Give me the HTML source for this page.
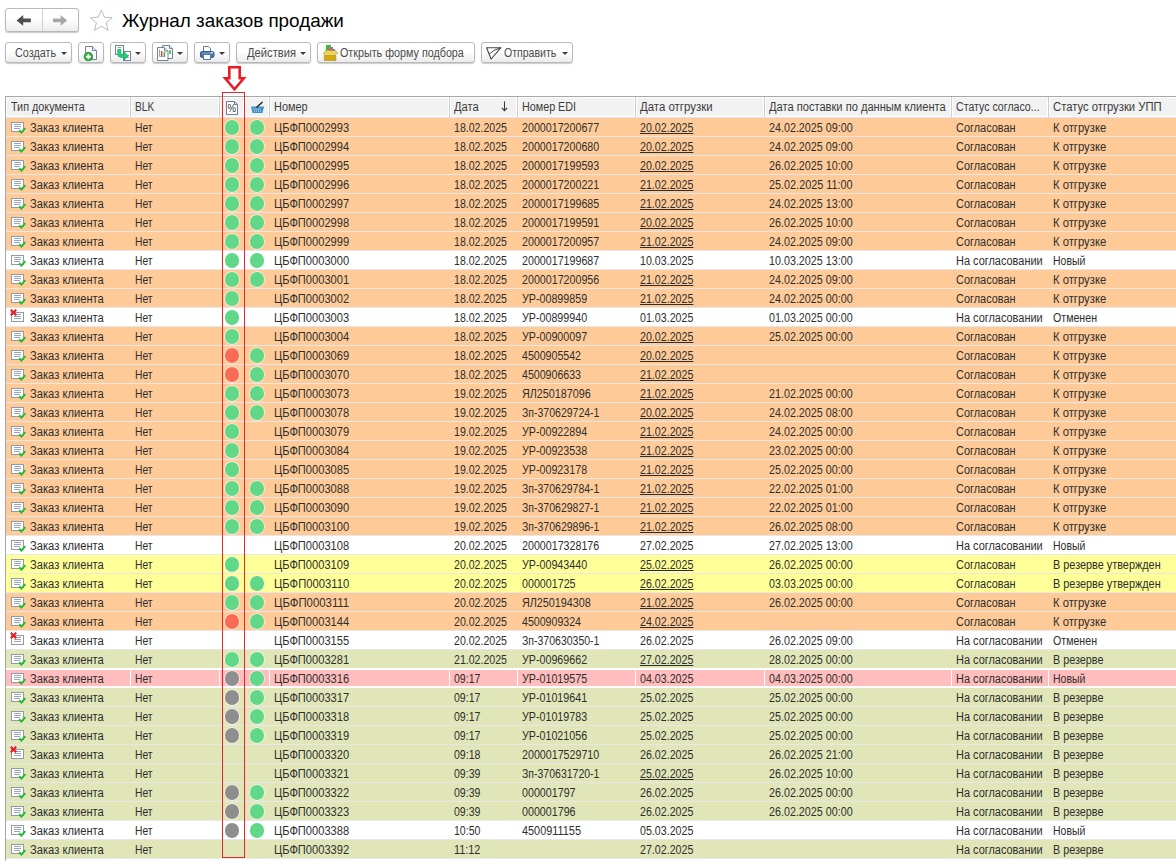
<!DOCTYPE html>
<html lang="ru"><head><meta charset="utf-8"><title>Журнал заказов продажи</title>
<style>
html,body{margin:0;padding:0}
body{width:1176px;height:861px;overflow:hidden;background:#fff;position:relative;font:12px/18px "Liberation Sans",sans-serif;color:#2e2e2e}
.abs{position:absolute}
/* navigation */
.nav{position:absolute;left:5px;top:8px;width:72px;height:22px;border:1px solid #b9b9b9;border-radius:3px;background:linear-gradient(#fff 40%,#ececec);box-shadow:0 1px 1px rgba(0,0,0,.22)}
.nav:before{content:"";position:absolute;left:36px;top:0;width:1px;height:22px;background:#cfcfcf}
.nav svg{position:absolute;top:0;left:0}
.star{position:absolute;left:88px;top:8px}
.title{position:absolute;left:122px;top:9.500px;font-size:18.500px;line-height:22px;color:#000;white-space:nowrap;transform-origin:0 50%;transform:scaleX(1.02)}
/* toolbar */
.btn{position:absolute;top:42px;height:19px;border:1px solid #b9b9b9;border-radius:3px;background:linear-gradient(#fff 45%,#ebebeb);box-shadow:0 1px 1px rgba(0,0,0,.2);box-sizing:content-box}
.btn .t{position:absolute;top:1px;line-height:19px;white-space:nowrap;transform-origin:0 50%;transform:scaleX(.9);color:#4a4a4a}
.btn .dd{position:absolute;top:9px;width:0;height:0;border-left:3px solid transparent;border-right:3px solid transparent;border-top:3px solid #3c3c3c}
.btn svg{position:absolute;left:0;top:0}
/* annotation */
.arrow{position:absolute;left:221px;top:64px}
.redbox{position:absolute;left:222px;top:92px;width:21px;height:764px;border:1px solid #e8262b}
/* grid */
.gb-l{position:absolute;left:5px;top:96px;width:1px;height:765px;background:#a7a7a7}
.gb-t{position:absolute;left:5px;top:96px;width:1171px;height:1px;background:#a7a7a7}
.hdr{position:absolute;left:6px;top:97px;width:1170px;height:20px;background:#fff;border-bottom:1px solid #e2e2e2}
.h{position:absolute;top:1px;height:18px;background:#f2f2f2}
.hs{position:absolute;top:0;width:1px;height:20px;background:#cdcdcd}
.ht{position:absolute;top:0;line-height:20px;white-space:nowrap;transform-origin:0 50%;transform:scaleX(.93);color:#3b3b3b}
.hdr svg{position:absolute}
.r{position:absolute;left:6px;width:1170px;height:18px;border-bottom:1px solid #e7e7e7}
.o{background:#fecb98}.w{background:#fff}.y{background:#ffff98}.g{background:#e1e6b9}.p{background:#ffbdbd;border-bottom-color:#fff;box-shadow:0 -1px 0 #fff,inset 0 1px 0 #fff,inset 0 -1px 0 #fff}
.c{position:absolute;top:0;line-height:20px;white-space:nowrap;transform-origin:0 50%;transform:scaleX(.93)}
.c u{text-decoration:underline;text-underline-offset:1px}
.ic{position:absolute;left:4px;top:0}
.c0{left:24px}
.c1{left:129px}
.c2{left:268px}
.c3{left:448px}
.c4{left:516px}
.c5{left:634px}
.c6{left:763px}
.c7{left:950px}
.c8{left:1047px}
.d{position:absolute;top:2px;width:14.500px;height:14.500px;border-radius:50%;box-shadow:0 0 0 .7px rgba(255,255,255,.7)}
.d1{left:218.750px}.d2{left:243.750px}
.G{background:#60d888}.R{background:#f96b52}.X{background:#8e8e8e}
.vs{position:absolute;top:0;width:1px;height:18px;background:#fff}
.c0{transform:scaleX(0.931)}
.c1{transform:scaleX(0.861)}
.c2{transform:scaleX(0.927)}
.c3{transform:scaleX(0.882)}
.c4{transform:scaleX(0.892)}
.c5{transform:scaleX(0.889)}
.c6{transform:scaleX(0.895)}
.c7{transform:scaleX(0.91)}
.c8{transform:scaleX(0.938)}
.c.s872{transform:scaleX(0.872)}
.c.s875{transform:scaleX(0.875)}
.c.s879{transform:scaleX(0.879)}
.c.s884{transform:scaleX(0.884)}
.c.s886{transform:scaleX(0.886)}
.c.s890{transform:scaleX(0.89)}
.c.s899{transform:scaleX(0.899)}
.c.s903{transform:scaleX(0.903)}
.c.s906{transform:scaleX(0.906)}
.c.s908{transform:scaleX(0.908)}
.c.s912{transform:scaleX(0.912)}
.c.s938{transform:scaleX(0.938)}
.c.s948{transform:scaleX(0.948)}

</style></head>
<body>
<div class="nav">
<svg width="72" height="22" viewBox="0 0 72 22">
<path d="M10.600 11.400l6.600-5.400v3.500h7.600v3.800h-7.600v3.500z" fill="#4d4d4d"/>
<path d="M61.200 11.400l-6.600-5.400v3.500h-7.600v3.800h7.600v3.500z" fill="#a8a8a8"/>
</svg>
</div>
<svg class="star" width="26" height="24" viewBox="0 0 26 24"><path d="M13.300 2l3.100 7.200 7.800.6-6 5 1.900 7.600-6.800-4.200-6.800 4.200 1.900-7.600-6-5 7.800-.6z" fill="#fff" stroke="#b4bcc6" stroke-width="1"/></svg>
<div class="title">Журнал заказов продажи</div>

<div class="btn" style="left:5px;width:65px"><span class="t" style="left:9px;transform:scaleX(.899)">Создать</span><i class="dd" style="left:55px"></i></div>
<div class="btn" style="left:78px;width:24px">
<svg width="24" height="18" viewBox="0 0 24 18"><path d="M6.500 3.500h7l4 4v9h-11z" fill="#fff" stroke="#71839b"/><path d="M13.500 3.500v4h4" fill="#e9eef4" stroke="#71839b"/><circle cx="9.400" cy="13.600" r="4.300" fill="#2cb040" stroke="#1d8c2c" stroke-width=".8"/><path d="M9.400 11v5.200M6.800 13.600h5.200" stroke="#fff" stroke-width="1.700"/></svg>
</div>
<div class="btn" style="left:110px;width:34px">
<svg width="24" height="18" viewBox="0 0 24 18"><rect x="4.500" y="2.500" width="8" height="9" fill="#fff" stroke="#71839b"/><path d="M6.500 4.500h4" stroke="#9aa7b6"/><rect x="12.500" y="8.500" width="7" height="9" fill="#fff" stroke="#71839b"/><path d="M15 12.500h3M15 14.500h3" stroke="#9aa7b6"/><path d="M6.800 6.300h3v4.200q0 1 1 1h2v-3l4.400 4.400-4.400 4.400v-3h-3q-3 0-3-3z" fill="#1fd07c" stroke="#17a55f" stroke-width=".7"/></svg>
<i class="dd" style="left:24px"></i></div>
<div class="btn" style="left:152px;width:34px">
<svg width="24" height="18" viewBox="0 0 24 18"><path d="M9.500 2.500h7l3 3v10h-10z" fill="#fff" stroke="#71839b"/><path d="M16.500 2.500v3h3" fill="#dfe6ee" stroke="#71839b"/><path d="M17 11v-4" stroke="#3cb648" stroke-width="1.600"/><path d="M4.500 4.500h7l3.500 3.500v9.500h-10.500z" fill="#fff" stroke="#71839b"/><path d="M11.500 4.500v3.500h3.500" fill="#dfe6ee" stroke="#71839b"/><path d="M6.500 6.500v7h6" fill="none" stroke="#9aa3ad"/><path d="M8.700 13v-5" stroke="#e8432f" stroke-width="1.500"/><path d="M11.400 13v-4" stroke="#3cb648" stroke-width="1.500"/></svg>
<i class="dd" style="left:24px"></i></div>
<div class="btn" style="left:194px;width:34px">
<svg width="24" height="18" viewBox="0 0 24 18"><path d="M8.500 8.500v-5h5l2 2v3" fill="#fff" stroke="#5a79a3"/><rect x="5.500" y="8.500" width="13.500" height="6" rx="1.600" fill="#4876ad" stroke="#345a8e"/><path d="M7 10h10.500" stroke="#7fa1cb" stroke-width="1"/><rect x="8.500" y="11.500" width="7" height="5" fill="#fff" stroke="#5a79a3"/><rect x="15.500" y="9.300" width="2.500" height="1" fill="#fff"/></svg>
<i class="dd" style="left:24px"></i></div>
<div class="btn" style="left:236px;width:73px"><span class="t" style="left:9.500px;transform:scaleX(.932)">Действия</span><i class="dd" style="left:63px"></i></div>
<div class="btn" style="left:317px;width:156px">
<svg width="24" height="18" viewBox="0 0 24 18"><rect x="8" y="2" width="5" height="8" fill="#1fc73a"/><rect x="10.500" y="4" width="4.500" height="6" fill="#f0596e"/><rect x="12.500" y="6" width="4.500" height="4" fill="#4a80e0"/><path d="M5 10.500l2.500-3h10l2.500 3z" fill="#f0d256" stroke="#b58d12" stroke-width=".5"/><rect x="6.300" y="10.300" width="11.600" height="7.200" fill="#d4a90f"/><rect x="6.300" y="10.300" width="11.600" height="2" fill="#f3e27e"/><path d="M6.300 12.300h11.600v5.200h-11.600z" fill="none" stroke="#a37f10" stroke-width=".5"/></svg>
<span class="t" style="left:22px;transform:scaleX(.896)">Открыть форму подбора</span></div>
<div class="btn" style="left:481px;width:90px">
<svg width="24" height="18" viewBox="0 0 24 18"><path d="M4.600 4.700h14.300l-9.800 11.300z" fill="#fff" stroke="#454545" stroke-width="1.100" stroke-linejoin="round"/><path d="M18.900 4.700q-8 2.300-11.700 6.300" stroke="#454545" stroke-width="1" fill="none"/></svg>
<span class="t" style="left:22px;transform:scaleX(.879)">Отправить</span><i class="dd" style="left:80px"></i></div>

<svg class="arrow" width="28" height="28" viewBox="0 0 28 28"><path d="M8.300 3.300h10.400v11h4.100L13.500 25.300 4.200 14.300h4.100z" fill="#fff" stroke="#ec1c24" stroke-width="2.600" stroke-linejoin="miter"/></svg>

<div class="gb-t"></div><div class="gb-l"></div>
<div class="hdr">
<div class="h" style="left:1px;width:122px"></div><i class="hs" style="left:124px"></i>
<div class="h" style="left:126px;width:86px"></div><i class="hs" style="left:213px"></i>
<div class="h" style="left:215px;width:22px"></div><i class="hs" style="left:238px"></i>
<div class="h" style="left:240px;width:22px"></div><i class="hs" style="left:263px"></i>
<div class="h" style="left:265px;width:177px"></div><i class="hs" style="left:443px"></i>
<div class="h" style="left:445px;width:65px"></div><i class="hs" style="left:511px"></i>
<div class="h" style="left:513px;width:115px"></div><i class="hs" style="left:629px"></i>
<div class="h" style="left:631px;width:126px"></div><i class="hs" style="left:758px"></i>
<div class="h" style="left:760px;width:184px"></div><i class="hs" style="left:945px"></i>
<div class="h" style="left:947px;width:94px"></div><i class="hs" style="left:1042px"></i>
<div class="h" style="left:1044px;width:126px"></div>
<span class="ht" style="left:5px;transform:scaleX(.9)">Тип документа</span>
<span class="ht" style="left:129px;transform:scaleX(.851)">BLK</span>
<svg width="14" height="16" viewBox="0 0 14 16" style="left:219px;top:3px"><path d="M1.500 1.500h8l3 3v10h-11z" fill="#fff" stroke="#6d7f97"/><path d="M9.500 1.500v3h3" fill="none" stroke="#6d7f97"/><text x="2.400" y="12.400" font-family="Liberation Sans, sans-serif" font-size="11.500" fill="#333" textLength="8.500" lengthAdjust="spacingAndGlyphs">%</text></svg>
<svg width="16" height="14" viewBox="0 0 16 14" style="left:244px;top:4px"><path d="M1 5.500h13l-1.500 6.500h-10z" fill="#3f8fc6"/><path d="M3.500 8h8M4 10h7" stroke="#d8ecf8" stroke-width="1" stroke-dasharray="1 1"/><path d="M6.500 6.500l6-5.500" stroke="#222" stroke-width="1.400"/></svg>
<span class="ht" style="left:268px;transform:scaleX(.91)">Номер</span>
<span class="ht" style="left:448px;transform:scaleX(.926)">Дата</span>
<svg width="7" height="11" viewBox="0 0 7 11" style="left:495px;top:4px"><path d="M3.500 0.500v9M0.800 6.800l2.700 2.900 2.700-2.900" fill="none" stroke="#3a3a3a" stroke-width="1.100"/></svg>
<span class="ht" style="left:516px;transform:scaleX(.897)">Номер EDI</span>
<span class="ht" style="left:634px;transform:scaleX(.953)">Дата отгрузки</span>
<span class="ht" style="left:763px;transform:scaleX(.926)">Дата поставки по данным клиента</span>
<span class="ht" style="left:950px;transform:scaleX(.883)">Статус согласо...</span>
<span class="ht" style="left:1047px;transform:scaleX(.938)">Статус отгрузки УПП</span>
</div>
<div class="grid">
<div class="r o" style="top:118px"><svg class="ic" width="17" height="18" viewBox="0 0 17 18"><rect x="1.500" y="4.500" width="12" height="9" fill="#fff" stroke="#8d9bac"/><path d="M4 6.500h7M4 8.500h7M4 10.500h6" stroke="#9aa6b5" stroke-width="1" fill="none"/><path d="M9.200 12.200L11.400 14.600L15.300 10.200" stroke="#25b932" stroke-width="2" fill="none"/></svg><span class="c c0">Заказ клиента</span><span class="c c1">Нет</span><i class="d d1 G"></i><i class="d d2 G"></i><span class="c c2">ЦБФП0002993</span><span class="c c3">18.02.2025</span><span class="c c4 s890">2000017200677</span><span class="c c5"><u>20.02.2025</u></span><span class="c c6">24.02.2025 09:00</span><span class="c c7">Согласован</span><span class="c c8">К отгрузке</span></div>
<div class="r o" style="top:137px"><svg class="ic" width="17" height="18" viewBox="0 0 17 18"><rect x="1.500" y="4.500" width="12" height="9" fill="#fff" stroke="#8d9bac"/><path d="M4 6.500h7M4 8.500h7M4 10.500h6" stroke="#9aa6b5" stroke-width="1" fill="none"/><path d="M9.200 12.200L11.400 14.600L15.300 10.200" stroke="#25b932" stroke-width="2" fill="none"/></svg><span class="c c0">Заказ клиента</span><span class="c c1">Нет</span><i class="d d1 G"></i><i class="d d2 G"></i><span class="c c2">ЦБФП0002994</span><span class="c c3">18.02.2025</span><span class="c c4 s890">2000017200680</span><span class="c c5"><u>20.02.2025</u></span><span class="c c6">24.02.2025 09:00</span><span class="c c7">Согласован</span><span class="c c8">К отгрузке</span></div>
<div class="r o" style="top:156px"><svg class="ic" width="17" height="18" viewBox="0 0 17 18"><rect x="1.500" y="4.500" width="12" height="9" fill="#fff" stroke="#8d9bac"/><path d="M4 6.500h7M4 8.500h7M4 10.500h6" stroke="#9aa6b5" stroke-width="1" fill="none"/><path d="M9.200 12.200L11.400 14.600L15.300 10.200" stroke="#25b932" stroke-width="2" fill="none"/></svg><span class="c c0">Заказ клиента</span><span class="c c1">Нет</span><i class="d d1 G"></i><i class="d d2 G"></i><span class="c c2">ЦБФП0002995</span><span class="c c3">18.02.2025</span><span class="c c4 s890">2000017199593</span><span class="c c5"><u>20.02.2025</u></span><span class="c c6">26.02.2025 10:00</span><span class="c c7">Согласован</span><span class="c c8">К отгрузке</span></div>
<div class="r o" style="top:175px"><svg class="ic" width="17" height="18" viewBox="0 0 17 18"><rect x="1.500" y="4.500" width="12" height="9" fill="#fff" stroke="#8d9bac"/><path d="M4 6.500h7M4 8.500h7M4 10.500h6" stroke="#9aa6b5" stroke-width="1" fill="none"/><path d="M9.200 12.200L11.400 14.600L15.300 10.200" stroke="#25b932" stroke-width="2" fill="none"/></svg><span class="c c0">Заказ клиента</span><span class="c c1">Нет</span><i class="d d1 G"></i><i class="d d2 G"></i><span class="c c2">ЦБФП0002996</span><span class="c c3">18.02.2025</span><span class="c c4 s890">2000017200221</span><span class="c c5"><u>21.02.2025</u></span><span class="c c6 s903">25.02.2025 11:00</span><span class="c c7">Согласован</span><span class="c c8">К отгрузке</span></div>
<div class="r o" style="top:194px"><svg class="ic" width="17" height="18" viewBox="0 0 17 18"><rect x="1.500" y="4.500" width="12" height="9" fill="#fff" stroke="#8d9bac"/><path d="M4 6.500h7M4 8.500h7M4 10.500h6" stroke="#9aa6b5" stroke-width="1" fill="none"/><path d="M9.200 12.200L11.400 14.600L15.300 10.200" stroke="#25b932" stroke-width="2" fill="none"/></svg><span class="c c0">Заказ клиента</span><span class="c c1">Нет</span><i class="d d1 G"></i><i class="d d2 G"></i><span class="c c2">ЦБФП0002997</span><span class="c c3">18.02.2025</span><span class="c c4 s890">2000017199685</span><span class="c c5"><u>21.02.2025</u></span><span class="c c6">24.02.2025 13:00</span><span class="c c7">Согласован</span><span class="c c8">К отгрузке</span></div>
<div class="r o" style="top:213px"><svg class="ic" width="17" height="18" viewBox="0 0 17 18"><rect x="1.500" y="4.500" width="12" height="9" fill="#fff" stroke="#8d9bac"/><path d="M4 6.500h7M4 8.500h7M4 10.500h6" stroke="#9aa6b5" stroke-width="1" fill="none"/><path d="M9.200 12.200L11.400 14.600L15.300 10.200" stroke="#25b932" stroke-width="2" fill="none"/></svg><span class="c c0">Заказ клиента</span><span class="c c1">Нет</span><i class="d d1 G"></i><i class="d d2 G"></i><span class="c c2">ЦБФП0002998</span><span class="c c3">18.02.2025</span><span class="c c4 s890">2000017199591</span><span class="c c5"><u>20.02.2025</u></span><span class="c c6">26.02.2025 10:00</span><span class="c c7">Согласован</span><span class="c c8">К отгрузке</span></div>
<div class="r o" style="top:232px"><svg class="ic" width="17" height="18" viewBox="0 0 17 18"><rect x="1.500" y="4.500" width="12" height="9" fill="#fff" stroke="#8d9bac"/><path d="M4 6.500h7M4 8.500h7M4 10.500h6" stroke="#9aa6b5" stroke-width="1" fill="none"/><path d="M9.200 12.200L11.400 14.600L15.300 10.200" stroke="#25b932" stroke-width="2" fill="none"/></svg><span class="c c0">Заказ клиента</span><span class="c c1">Нет</span><i class="d d1 G"></i><i class="d d2 G"></i><span class="c c2">ЦБФП0002999</span><span class="c c3">18.02.2025</span><span class="c c4 s890">2000017200957</span><span class="c c5"><u>21.02.2025</u></span><span class="c c6">24.02.2025 09:00</span><span class="c c7">Согласован</span><span class="c c8">К отгрузке</span></div>
<div class="r w" style="top:251px"><svg class="ic" width="17" height="18" viewBox="0 0 17 18"><rect x="1.500" y="4.500" width="12" height="9" fill="#fff" stroke="#8d9bac"/><path d="M4 6.500h7M4 8.500h7M4 10.500h6" stroke="#9aa6b5" stroke-width="1" fill="none"/><path d="M9.200 12.200L11.400 14.600L15.300 10.200" stroke="#25b932" stroke-width="2" fill="none"/></svg><span class="c c0">Заказ клиента</span><span class="c c1">Нет</span><i class="d d1 G"></i><i class="d d2 G"></i><span class="c c2">ЦБФП0003000</span><span class="c c3">18.02.2025</span><span class="c c4 s890">2000017199687</span><span class="c c5">10.03.2025</span><span class="c c6">10.03.2025 13:00</span><span class="c c7 s912">На согласовании</span><span class="c c8 s872">Новый</span></div>
<div class="r o" style="top:270px"><svg class="ic" width="17" height="18" viewBox="0 0 17 18"><rect x="1.500" y="4.500" width="12" height="9" fill="#fff" stroke="#8d9bac"/><path d="M4 6.500h7M4 8.500h7M4 10.500h6" stroke="#9aa6b5" stroke-width="1" fill="none"/><path d="M9.200 12.200L11.400 14.600L15.300 10.200" stroke="#25b932" stroke-width="2" fill="none"/></svg><span class="c c0">Заказ клиента</span><span class="c c1">Нет</span><i class="d d1 G"></i><i class="d d2 G"></i><span class="c c2">ЦБФП0003001</span><span class="c c3">18.02.2025</span><span class="c c4 s890">2000017200956</span><span class="c c5"><u>21.02.2025</u></span><span class="c c6">24.02.2025 09:00</span><span class="c c7">Согласован</span><span class="c c8">К отгрузке</span></div>
<div class="r o" style="top:289px"><svg class="ic" width="17" height="18" viewBox="0 0 17 18"><rect x="1.500" y="4.500" width="12" height="9" fill="#fff" stroke="#8d9bac"/><path d="M4 6.500h7M4 8.500h7M4 10.500h6" stroke="#9aa6b5" stroke-width="1" fill="none"/><path d="M9.200 12.200L11.400 14.600L15.300 10.200" stroke="#25b932" stroke-width="2" fill="none"/></svg><span class="c c0">Заказ клиента</span><span class="c c1">Нет</span><i class="d d1 G"></i><span class="c c2">ЦБФП0003002</span><span class="c c3">18.02.2025</span><span class="c c4">УР-00899859</span><span class="c c5"><u>21.02.2025</u></span><span class="c c6">24.02.2025 00:00</span><span class="c c7">Согласован</span><span class="c c8">К отгрузке</span></div>
<div class="r w" style="top:308px"><svg class="ic" width="17" height="18" viewBox="0 0 17 18"><rect x="1.500" y="4.500" width="12" height="9" fill="#fff" stroke="#8d9bac"/><path d="M4 6.500h7M4 8.500h7M4 10.500h7" stroke="#9aa6b5" stroke-width="1" fill="none"/><path d="M0.800 1.800l5.400 5.400M6.200 1.800l-5.400 5.400" stroke="#e81c24" stroke-width="2.100" fill="none"/></svg><span class="c c0">Заказ клиента</span><span class="c c1">Нет</span><i class="d d1 G"></i><span class="c c2">ЦБФП0003003</span><span class="c c3">18.02.2025</span><span class="c c4">УР-00899940</span><span class="c c5">01.03.2025</span><span class="c c6">01.03.2025 00:00</span><span class="c c7 s912">На согласовании</span><span class="c c8 s886">Отменен</span></div>
<div class="r o" style="top:327px"><svg class="ic" width="17" height="18" viewBox="0 0 17 18"><rect x="1.500" y="4.500" width="12" height="9" fill="#fff" stroke="#8d9bac"/><path d="M4 6.500h7M4 8.500h7M4 10.500h6" stroke="#9aa6b5" stroke-width="1" fill="none"/><path d="M9.200 12.200L11.400 14.600L15.300 10.200" stroke="#25b932" stroke-width="2" fill="none"/></svg><span class="c c0">Заказ клиента</span><span class="c c1">Нет</span><i class="d d1 G"></i><span class="c c2">ЦБФП0003004</span><span class="c c3">18.02.2025</span><span class="c c4">УР-00900097</span><span class="c c5"><u>20.02.2025</u></span><span class="c c6">25.02.2025 00:00</span><span class="c c7">Согласован</span><span class="c c8">К отгрузке</span></div>
<div class="r o" style="top:346px"><svg class="ic" width="17" height="18" viewBox="0 0 17 18"><rect x="1.500" y="4.500" width="12" height="9" fill="#fff" stroke="#8d9bac"/><path d="M4 6.500h7M4 8.500h7M4 10.500h6" stroke="#9aa6b5" stroke-width="1" fill="none"/><path d="M9.200 12.200L11.400 14.600L15.300 10.200" stroke="#25b932" stroke-width="2" fill="none"/></svg><span class="c c0">Заказ клиента</span><span class="c c1">Нет</span><i class="d d1 R"></i><i class="d d2 G"></i><span class="c c2">ЦБФП0003069</span><span class="c c3">18.02.2025</span><span class="c c4 s884">4500905542</span><span class="c c5"><u>20.02.2025</u></span><span class="c c7">Согласован</span><span class="c c8">К отгрузке</span></div>
<div class="r o" style="top:365px"><svg class="ic" width="17" height="18" viewBox="0 0 17 18"><rect x="1.500" y="4.500" width="12" height="9" fill="#fff" stroke="#8d9bac"/><path d="M4 6.500h7M4 8.500h7M4 10.500h6" stroke="#9aa6b5" stroke-width="1" fill="none"/><path d="M9.200 12.200L11.400 14.600L15.300 10.200" stroke="#25b932" stroke-width="2" fill="none"/></svg><span class="c c0">Заказ клиента</span><span class="c c1">Нет</span><i class="d d1 R"></i><i class="d d2 G"></i><span class="c c2">ЦБФП0003070</span><span class="c c3">18.02.2025</span><span class="c c4 s884">4500906633</span><span class="c c5"><u>21.02.2025</u></span><span class="c c7">Согласован</span><span class="c c8">К отгрузке</span></div>
<div class="r o" style="top:384px"><svg class="ic" width="17" height="18" viewBox="0 0 17 18"><rect x="1.500" y="4.500" width="12" height="9" fill="#fff" stroke="#8d9bac"/><path d="M4 6.500h7M4 8.500h7M4 10.500h6" stroke="#9aa6b5" stroke-width="1" fill="none"/><path d="M9.200 12.200L11.400 14.600L15.300 10.200" stroke="#25b932" stroke-width="2" fill="none"/></svg><span class="c c0">Заказ клиента</span><span class="c c1">Нет</span><i class="d d1 G"></i><i class="d d2 G"></i><span class="c c2">ЦБФП0003073</span><span class="c c3">19.02.2025</span><span class="c c4 s899">ЯЛ250187096</span><span class="c c5"><u>21.02.2025</u></span><span class="c c6">21.02.2025 00:00</span><span class="c c7">Согласован</span><span class="c c8">К отгрузке</span></div>
<div class="r o" style="top:403px"><svg class="ic" width="17" height="18" viewBox="0 0 17 18"><rect x="1.500" y="4.500" width="12" height="9" fill="#fff" stroke="#8d9bac"/><path d="M4 6.500h7M4 8.500h7M4 10.500h6" stroke="#9aa6b5" stroke-width="1" fill="none"/><path d="M9.200 12.200L11.400 14.600L15.300 10.200" stroke="#25b932" stroke-width="2" fill="none"/></svg><span class="c c0">Заказ клиента</span><span class="c c1">Нет</span><i class="d d1 G"></i><i class="d d2 G"></i><span class="c c2">ЦБФП0003078</span><span class="c c3">19.02.2025</span><span class="c c4 s875">Зп-370629724-1</span><span class="c c5"><u>20.02.2025</u></span><span class="c c6">24.02.2025 08:00</span><span class="c c7">Согласован</span><span class="c c8">К отгрузке</span></div>
<div class="r o" style="top:422px"><svg class="ic" width="17" height="18" viewBox="0 0 17 18"><rect x="1.500" y="4.500" width="12" height="9" fill="#fff" stroke="#8d9bac"/><path d="M4 6.500h7M4 8.500h7M4 10.500h6" stroke="#9aa6b5" stroke-width="1" fill="none"/><path d="M9.200 12.200L11.400 14.600L15.300 10.200" stroke="#25b932" stroke-width="2" fill="none"/></svg><span class="c c0">Заказ клиента</span><span class="c c1">Нет</span><i class="d d1 G"></i><span class="c c2">ЦБФП0003079</span><span class="c c3">19.02.2025</span><span class="c c4">УР-00922894</span><span class="c c5"><u>21.02.2025</u></span><span class="c c6">24.02.2025 00:00</span><span class="c c7">Согласован</span><span class="c c8">К отгрузке</span></div>
<div class="r o" style="top:441px"><svg class="ic" width="17" height="18" viewBox="0 0 17 18"><rect x="1.500" y="4.500" width="12" height="9" fill="#fff" stroke="#8d9bac"/><path d="M4 6.500h7M4 8.500h7M4 10.500h6" stroke="#9aa6b5" stroke-width="1" fill="none"/><path d="M9.200 12.200L11.400 14.600L15.300 10.200" stroke="#25b932" stroke-width="2" fill="none"/></svg><span class="c c0">Заказ клиента</span><span class="c c1">Нет</span><i class="d d1 G"></i><span class="c c2">ЦБФП0003084</span><span class="c c3">19.02.2025</span><span class="c c4">УР-00923538</span><span class="c c5"><u>21.02.2025</u></span><span class="c c6">23.02.2025 00:00</span><span class="c c7">Согласован</span><span class="c c8">К отгрузке</span></div>
<div class="r o" style="top:460px"><svg class="ic" width="17" height="18" viewBox="0 0 17 18"><rect x="1.500" y="4.500" width="12" height="9" fill="#fff" stroke="#8d9bac"/><path d="M4 6.500h7M4 8.500h7M4 10.500h6" stroke="#9aa6b5" stroke-width="1" fill="none"/><path d="M9.200 12.200L11.400 14.600L15.300 10.200" stroke="#25b932" stroke-width="2" fill="none"/></svg><span class="c c0">Заказ клиента</span><span class="c c1">Нет</span><i class="d d1 G"></i><span class="c c2">ЦБФП0003085</span><span class="c c3">19.02.2025</span><span class="c c4">УР-00923178</span><span class="c c5"><u>21.02.2025</u></span><span class="c c6">25.02.2025 00:00</span><span class="c c7">Согласован</span><span class="c c8">К отгрузке</span></div>
<div class="r o" style="top:479px"><svg class="ic" width="17" height="18" viewBox="0 0 17 18"><rect x="1.500" y="4.500" width="12" height="9" fill="#fff" stroke="#8d9bac"/><path d="M4 6.500h7M4 8.500h7M4 10.500h6" stroke="#9aa6b5" stroke-width="1" fill="none"/><path d="M9.200 12.200L11.400 14.600L15.300 10.200" stroke="#25b932" stroke-width="2" fill="none"/></svg><span class="c c0">Заказ клиента</span><span class="c c1">Нет</span><i class="d d1 G"></i><i class="d d2 G"></i><span class="c c2">ЦБФП0003088</span><span class="c c3">19.02.2025</span><span class="c c4 s875">Зп-370629784-1</span><span class="c c5"><u>21.02.2025</u></span><span class="c c6">22.02.2025 01:00</span><span class="c c7">Согласован</span><span class="c c8">К отгрузке</span></div>
<div class="r o" style="top:498px"><svg class="ic" width="17" height="18" viewBox="0 0 17 18"><rect x="1.500" y="4.500" width="12" height="9" fill="#fff" stroke="#8d9bac"/><path d="M4 6.500h7M4 8.500h7M4 10.500h6" stroke="#9aa6b5" stroke-width="1" fill="none"/><path d="M9.200 12.200L11.400 14.600L15.300 10.200" stroke="#25b932" stroke-width="2" fill="none"/></svg><span class="c c0">Заказ клиента</span><span class="c c1">Нет</span><i class="d d1 G"></i><i class="d d2 G"></i><span class="c c2">ЦБФП0003090</span><span class="c c3">19.02.2025</span><span class="c c4 s875">Зп-370629827-1</span><span class="c c5"><u>21.02.2025</u></span><span class="c c6">22.02.2025 01:00</span><span class="c c7">Согласован</span><span class="c c8">К отгрузке</span></div>
<div class="r o" style="top:517px"><svg class="ic" width="17" height="18" viewBox="0 0 17 18"><rect x="1.500" y="4.500" width="12" height="9" fill="#fff" stroke="#8d9bac"/><path d="M4 6.500h7M4 8.500h7M4 10.500h6" stroke="#9aa6b5" stroke-width="1" fill="none"/><path d="M9.200 12.200L11.400 14.600L15.300 10.200" stroke="#25b932" stroke-width="2" fill="none"/></svg><span class="c c0">Заказ клиента</span><span class="c c1">Нет</span><i class="d d1 G"></i><i class="d d2 G"></i><span class="c c2">ЦБФП0003100</span><span class="c c3">19.02.2025</span><span class="c c4 s875">Зп-370629896-1</span><span class="c c5"><u>21.02.2025</u></span><span class="c c6">26.02.2025 08:00</span><span class="c c7">Согласован</span><span class="c c8">К отгрузке</span></div>
<div class="r w" style="top:536px"><svg class="ic" width="17" height="18" viewBox="0 0 17 18"><rect x="1.500" y="4.500" width="12" height="9" fill="#fff" stroke="#8d9bac"/><path d="M4 6.500h7M4 8.500h7M4 10.500h6" stroke="#9aa6b5" stroke-width="1" fill="none"/><path d="M9.200 12.200L11.400 14.600L15.300 10.200" stroke="#25b932" stroke-width="2" fill="none"/></svg><span class="c c0">Заказ клиента</span><span class="c c1">Нет</span><span class="c c2">ЦБФП0003108</span><span class="c c3">20.02.2025</span><span class="c c4 s890">2000017328176</span><span class="c c5">27.02.2025</span><span class="c c6">27.02.2025 13:00</span><span class="c c7 s912">На согласовании</span><span class="c c8 s872">Новый</span></div>
<div class="r y" style="top:555px"><svg class="ic" width="17" height="18" viewBox="0 0 17 18"><rect x="1.500" y="4.500" width="12" height="9" fill="#fff" stroke="#8d9bac"/><path d="M4 6.500h7M4 8.500h7M4 10.500h6" stroke="#9aa6b5" stroke-width="1" fill="none"/><path d="M9.200 12.200L11.400 14.600L15.300 10.200" stroke="#25b932" stroke-width="2" fill="none"/></svg><span class="c c0">Заказ клиента</span><span class="c c1">Нет</span><i class="d d1 G"></i><span class="c c2">ЦБФП0003109</span><span class="c c3">20.02.2025</span><span class="c c4">УР-00943440</span><span class="c c5"><u>25.02.2025</u></span><span class="c c6">26.02.2025 00:00</span><span class="c c7">Согласован</span><span class="c c8 s906">В резерве утвержден</span></div>
<div class="r y" style="top:574px"><svg class="ic" width="17" height="18" viewBox="0 0 17 18"><rect x="1.500" y="4.500" width="12" height="9" fill="#fff" stroke="#8d9bac"/><path d="M4 6.500h7M4 8.500h7M4 10.500h6" stroke="#9aa6b5" stroke-width="1" fill="none"/><path d="M9.200 12.200L11.400 14.600L15.300 10.200" stroke="#25b932" stroke-width="2" fill="none"/></svg><span class="c c0">Заказ клиента</span><span class="c c1">Нет</span><i class="d d1 G"></i><i class="d d2 G"></i><span class="c c2 s938">ЦБФП0003110</span><span class="c c3">20.02.2025</span><span class="c c4">000001725</span><span class="c c5"><u>26.02.2025</u></span><span class="c c6">03.03.2025 00:00</span><span class="c c7">Согласован</span><span class="c c8 s906">В резерве утвержден</span></div>
<div class="r o" style="top:593px"><svg class="ic" width="17" height="18" viewBox="0 0 17 18"><rect x="1.500" y="4.500" width="12" height="9" fill="#fff" stroke="#8d9bac"/><path d="M4 6.500h7M4 8.500h7M4 10.500h6" stroke="#9aa6b5" stroke-width="1" fill="none"/><path d="M9.200 12.200L11.400 14.600L15.300 10.200" stroke="#25b932" stroke-width="2" fill="none"/></svg><span class="c c0">Заказ клиента</span><span class="c c1">Нет</span><i class="d d1 G"></i><i class="d d2 G"></i><span class="c c2 s948">ЦБФП0003111</span><span class="c c3">20.02.2025</span><span class="c c4 s899">ЯЛ250194308</span><span class="c c5"><u>21.02.2025</u></span><span class="c c6">26.02.2025 00:00</span><span class="c c7">Согласован</span><span class="c c8">К отгрузке</span></div>
<div class="r o" style="top:612px"><svg class="ic" width="17" height="18" viewBox="0 0 17 18"><rect x="1.500" y="4.500" width="12" height="9" fill="#fff" stroke="#8d9bac"/><path d="M4 6.500h7M4 8.500h7M4 10.500h6" stroke="#9aa6b5" stroke-width="1" fill="none"/><path d="M9.200 12.200L11.400 14.600L15.300 10.200" stroke="#25b932" stroke-width="2" fill="none"/></svg><span class="c c0">Заказ клиента</span><span class="c c1">Нет</span><i class="d d1 R"></i><i class="d d2 G"></i><span class="c c2">ЦБФП0003144</span><span class="c c3">20.02.2025</span><span class="c c4 s884">4500909324</span><span class="c c5"><u>24.02.2025</u></span><span class="c c7">Согласован</span><span class="c c8">К отгрузке</span></div>
<div class="r w" style="top:631px"><svg class="ic" width="17" height="18" viewBox="0 0 17 18"><rect x="1.500" y="4.500" width="12" height="9" fill="#fff" stroke="#8d9bac"/><path d="M4 6.500h7M4 8.500h7M4 10.500h7" stroke="#9aa6b5" stroke-width="1" fill="none"/><path d="M0.800 1.800l5.400 5.400M6.200 1.800l-5.400 5.400" stroke="#e81c24" stroke-width="2.100" fill="none"/></svg><span class="c c0">Заказ клиента</span><span class="c c1">Нет</span><span class="c c2">ЦБФП0003155</span><span class="c c3">20.02.2025</span><span class="c c4 s875">Зп-370630350-1</span><span class="c c5">26.02.2025</span><span class="c c6">26.02.2025 09:00</span><span class="c c7 s912">На согласовании</span><span class="c c8 s886">Отменен</span></div>
<div class="r g" style="top:650px"><svg class="ic" width="17" height="18" viewBox="0 0 17 18"><rect x="1.500" y="4.500" width="12" height="9" fill="#fff" stroke="#8d9bac"/><path d="M4 6.500h7M4 8.500h7M4 10.500h6" stroke="#9aa6b5" stroke-width="1" fill="none"/><path d="M9.200 12.200L11.400 14.600L15.300 10.200" stroke="#25b932" stroke-width="2" fill="none"/></svg><span class="c c0">Заказ клиента</span><span class="c c1">Нет</span><i class="d d1 G"></i><i class="d d2 G"></i><span class="c c2">ЦБФП0003281</span><span class="c c3">21.02.2025</span><span class="c c4">УР-00969662</span><span class="c c5"><u>27.02.2025</u></span><span class="c c6">28.02.2025 00:00</span><span class="c c7 s912">На согласовании</span><span class="c c8 s899">В резерве</span></div>
<div class="r p" style="top:669px"><svg class="ic" width="17" height="18" viewBox="0 0 17 18"><rect x="1.500" y="4.500" width="12" height="9" fill="#fff" stroke="#8d9bac"/><path d="M4 6.500h7M4 8.500h7M4 10.500h6" stroke="#9aa6b5" stroke-width="1" fill="none"/><path d="M9.200 12.200L11.400 14.600L15.300 10.200" stroke="#25b932" stroke-width="2" fill="none"/></svg><span class="c c0">Заказ клиента</span><span class="c c1">Нет</span><i class="d d1 X"></i><i class="d d2 G"></i><span class="c c2">ЦБФП0003316</span><span class="c c3 s879">09:17</span><span class="c c4">УР-01019575</span><span class="c c5">04.03.2025</span><span class="c c6">04.03.2025 00:00</span><span class="c c7 s912">На согласовании</span><span class="c c8 s872">Новый</span><b class="vs" style="left:124px"></b><b class="vs" style="left:213px"></b><b class="vs" style="left:238px"></b><b class="vs" style="left:263px"></b><b class="vs" style="left:443px"></b><b class="vs" style="left:511px"></b><b class="vs" style="left:629px"></b><b class="vs" style="left:758px"></b><b class="vs" style="left:945px"></b><b class="vs" style="left:1042px"></b></div>
<div class="r g" style="top:688px"><svg class="ic" width="17" height="18" viewBox="0 0 17 18"><rect x="1.500" y="4.500" width="12" height="9" fill="#fff" stroke="#8d9bac"/><path d="M4 6.500h7M4 8.500h7M4 10.500h6" stroke="#9aa6b5" stroke-width="1" fill="none"/><path d="M9.200 12.200L11.400 14.600L15.300 10.200" stroke="#25b932" stroke-width="2" fill="none"/></svg><span class="c c0">Заказ клиента</span><span class="c c1">Нет</span><i class="d d1 X"></i><i class="d d2 G"></i><span class="c c2">ЦБФП0003317</span><span class="c c3 s879">09:17</span><span class="c c4">УР-01019641</span><span class="c c5">25.02.2025</span><span class="c c6">25.02.2025 00:00</span><span class="c c7 s912">На согласовании</span><span class="c c8 s899">В резерве</span></div>
<div class="r g" style="top:707px"><svg class="ic" width="17" height="18" viewBox="0 0 17 18"><rect x="1.500" y="4.500" width="12" height="9" fill="#fff" stroke="#8d9bac"/><path d="M4 6.500h7M4 8.500h7M4 10.500h6" stroke="#9aa6b5" stroke-width="1" fill="none"/><path d="M9.200 12.200L11.400 14.600L15.300 10.200" stroke="#25b932" stroke-width="2" fill="none"/></svg><span class="c c0">Заказ клиента</span><span class="c c1">Нет</span><i class="d d1 X"></i><i class="d d2 G"></i><span class="c c2">ЦБФП0003318</span><span class="c c3 s879">09:17</span><span class="c c4">УР-01019783</span><span class="c c5">25.02.2025</span><span class="c c6">25.02.2025 00:00</span><span class="c c7 s912">На согласовании</span><span class="c c8 s899">В резерве</span></div>
<div class="r g" style="top:726px"><svg class="ic" width="17" height="18" viewBox="0 0 17 18"><rect x="1.500" y="4.500" width="12" height="9" fill="#fff" stroke="#8d9bac"/><path d="M4 6.500h7M4 8.500h7M4 10.500h6" stroke="#9aa6b5" stroke-width="1" fill="none"/><path d="M9.200 12.200L11.400 14.600L15.300 10.200" stroke="#25b932" stroke-width="2" fill="none"/></svg><span class="c c0">Заказ клиента</span><span class="c c1">Нет</span><i class="d d1 X"></i><i class="d d2 G"></i><span class="c c2">ЦБФП0003319</span><span class="c c3 s879">09:17</span><span class="c c4">УР-01021056</span><span class="c c5">25.02.2025</span><span class="c c6">25.02.2025 00:00</span><span class="c c7 s912">На согласовании</span><span class="c c8 s899">В резерве</span></div>
<div class="r g" style="top:745px"><svg class="ic" width="17" height="18" viewBox="0 0 17 18"><rect x="1.500" y="4.500" width="12" height="9" fill="#fff" stroke="#8d9bac"/><path d="M4 6.500h7M4 8.500h7M4 10.500h7" stroke="#9aa6b5" stroke-width="1" fill="none"/><path d="M0.800 1.800l5.400 5.400M6.200 1.800l-5.400 5.400" stroke="#e81c24" stroke-width="2.100" fill="none"/></svg><span class="c c0">Заказ клиента</span><span class="c c1">Нет</span><span class="c c2">ЦБФП0003320</span><span class="c c3 s879">09:18</span><span class="c c4 s890">2000017529710</span><span class="c c5">26.02.2025</span><span class="c c6">26.02.2025 21:00</span><span class="c c7 s912">На согласовании</span><span class="c c8 s899">В резерве</span></div>
<div class="r g" style="top:764px"><svg class="ic" width="17" height="18" viewBox="0 0 17 18"><rect x="1.500" y="4.500" width="12" height="9" fill="#fff" stroke="#8d9bac"/><path d="M4 6.500h7M4 8.500h7M4 10.500h6" stroke="#9aa6b5" stroke-width="1" fill="none"/><path d="M9.200 12.200L11.400 14.600L15.300 10.200" stroke="#25b932" stroke-width="2" fill="none"/></svg><span class="c c0">Заказ клиента</span><span class="c c1">Нет</span><span class="c c2">ЦБФП0003321</span><span class="c c3 s879">09:39</span><span class="c c4 s875">Зп-370631720-1</span><span class="c c5"><u>25.02.2025</u></span><span class="c c6">26.02.2025 10:00</span><span class="c c7 s912">На согласовании</span><span class="c c8 s899">В резерве</span></div>
<div class="r g" style="top:783px"><svg class="ic" width="17" height="18" viewBox="0 0 17 18"><rect x="1.500" y="4.500" width="12" height="9" fill="#fff" stroke="#8d9bac"/><path d="M4 6.500h7M4 8.500h7M4 10.500h6" stroke="#9aa6b5" stroke-width="1" fill="none"/><path d="M9.200 12.200L11.400 14.600L15.300 10.200" stroke="#25b932" stroke-width="2" fill="none"/></svg><span class="c c0">Заказ клиента</span><span class="c c1">Нет</span><i class="d d1 X"></i><i class="d d2 G"></i><span class="c c2">ЦБФП0003322</span><span class="c c3 s879">09:39</span><span class="c c4">000001797</span><span class="c c5">26.02.2025</span><span class="c c6">26.02.2025 00:00</span><span class="c c7 s912">На согласовании</span><span class="c c8 s899">В резерве</span></div>
<div class="r g" style="top:802px"><svg class="ic" width="17" height="18" viewBox="0 0 17 18"><rect x="1.500" y="4.500" width="12" height="9" fill="#fff" stroke="#8d9bac"/><path d="M4 6.500h7M4 8.500h7M4 10.500h6" stroke="#9aa6b5" stroke-width="1" fill="none"/><path d="M9.200 12.200L11.400 14.600L15.300 10.200" stroke="#25b932" stroke-width="2" fill="none"/></svg><span class="c c0">Заказ клиента</span><span class="c c1">Нет</span><i class="d d1 X"></i><i class="d d2 G"></i><span class="c c2">ЦБФП0003323</span><span class="c c3 s879">09:39</span><span class="c c4">000001796</span><span class="c c5">26.02.2025</span><span class="c c6">26.02.2025 00:00</span><span class="c c7 s912">На согласовании</span><span class="c c8 s899">В резерве</span></div>
<div class="r w" style="top:821px"><svg class="ic" width="17" height="18" viewBox="0 0 17 18"><rect x="1.500" y="4.500" width="12" height="9" fill="#fff" stroke="#8d9bac"/><path d="M4 6.500h7M4 8.500h7M4 10.500h6" stroke="#9aa6b5" stroke-width="1" fill="none"/><path d="M9.200 12.200L11.400 14.600L15.300 10.200" stroke="#25b932" stroke-width="2" fill="none"/></svg><span class="c c0">Заказ клиента</span><span class="c c1">Нет</span><i class="d d1 X"></i><i class="d d2 G"></i><span class="c c2">ЦБФП0003388</span><span class="c c3 s879">10:50</span><span class="c c4 s908">4500911155</span><span class="c c5">05.03.2025</span><span class="c c7 s912">На согласовании</span><span class="c c8 s872">Новый</span></div>
<div class="r g" style="top:840px"><svg class="ic" width="17" height="18" viewBox="0 0 17 18"><rect x="1.500" y="4.500" width="12" height="9" fill="#fff" stroke="#8d9bac"/><path d="M4 6.500h7M4 8.500h7M4 10.500h6" stroke="#9aa6b5" stroke-width="1" fill="none"/><path d="M9.200 12.200L11.400 14.600L15.300 10.200" stroke="#25b932" stroke-width="2" fill="none"/></svg><span class="c c0">Заказ клиента</span><span class="c c1">Нет</span><span class="c c2">ЦБФП0003392</span><span class="c c3 s906">11:12</span><span class="c c5">27.02.2025</span><span class="c c7 s912">На согласовании</span><span class="c c8 s899">В резерве</span></div>
</div>
<div class="redbox"></div>
</body></html>
